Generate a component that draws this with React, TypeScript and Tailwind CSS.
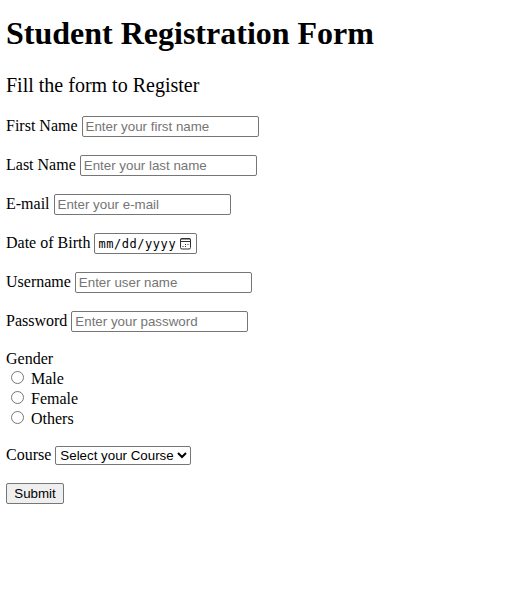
import type { ReactNode } from "react";

const control = "box-border border border-[#767676] bg-white text-[13.333px] text-black rounded-[2px]";

function Row({ label, children }: { label: string; children: ReactNode }) {
  return (
    <div className="flex h-[21px] items-center gap-1">
      <label className="pb-0.5 text-base leading-5">{label}</label>
      {children}
    </div>
  );
}

function Field({ label, hint, type = "text" }: { label: string; hint: string; type?: string }) {
  return (
    <Row label={label}>
      <input type={type} placeholder={hint} className={`${control} h-[21px] w-[177px] pl-[3px] pr-px font-['Liberation_Sans',Arial,sans-serif] placeholder:text-[#757575]`} />
    </Row>
  );
}

export default function App() {
  return (
    <main className="h-[616px] w-[526px] bg-white pl-1.5 pt-[15px] font-['Liberation_Serif','Times_New_Roman',serif] text-black">
      <h1 className="text-[32px] font-bold leading-[37px]">Student Registration Form</h1>
      <p className="mt-[22px] text-[20px] leading-[23px]">Fill the form to Register</p>
      <form className="mt-[19px]">
        <div className="flex flex-col gap-[18px]">
          <Field label="First Name" hint="Enter your first name" />
          <Field label="Last Name" hint="Enter your last name" />
          <Field label="E-mail" hint="Enter your e-mail" />
          <Row label="Date of Birth">
            <div className={`${control} flex h-[21px] w-[103px] items-center pl-[3px]`}>
              <span className="w-[78px] whitespace-nowrap pt-px font-['DejaVu_Sans_Mono',monospace] text-[12px] leading-[18px] tracking-[0.55px]">
                mm/dd/yyyy
              </span>
              <svg className="ml-[3px] shrink-0" width="13" height="13" viewBox="0 0 13 13" fill="none" stroke="#303030">
                <rect x="1.5" y="1.5" width="10" height="10.5" rx="1.5" />
                <path d="M1.5 2h10M1.5 4.5h10" />
                <path d="M6 7.5h1M8.5 7.5h1M3.5 9.5h1M6 9.5h1" strokeWidth="1.2" />
              </svg>
            </div>
          </Row>
          <Field label="Username" hint="Enter user name" />
          <Field label="Password" hint="Enter your password" type="password" />
        </div>
        <fieldset className="mt-[17px] text-base leading-5">
          <div>Gender</div>
          {["Male", "Female", "Others"].map((g) => (
            <label key={g} className="flex h-5 items-center">
              <input type="radio" name="gender" className="mb-[3px] ml-[5px] mr-[7px] size-[13px]" />
              {g}
            </label>
          ))}
        </fieldset>
        <div className="mt-4">
          <Row label="Course">
            <select className={`${control} h-[19px] w-[136px] font-['Liberation_Sans',Arial,sans-serif]`}>
              <option>Select your Course</option>
            </select>
          </Row>
        </div>
        <button type="button" className="mt-[17px] block h-[21px] w-[58px] rounded-[2px] border border-[#767676] bg-[#efefef] font-['Liberation_Sans',Arial,sans-serif] text-[13.333px] leading-[19px]">Submit</button>
      </form>
    </main>
  );
}
